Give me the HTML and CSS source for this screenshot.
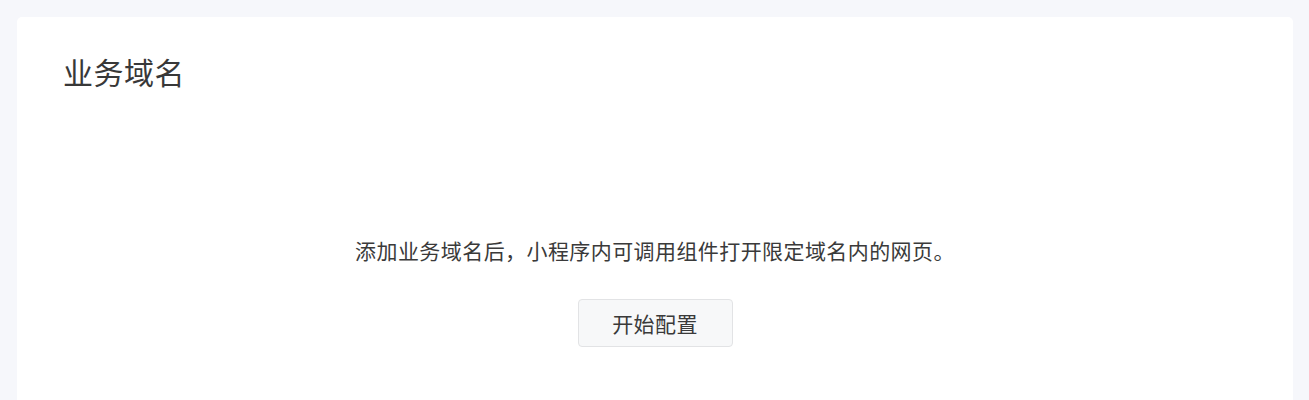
FILE: index.html
```html
<!DOCTYPE html>
<html lang="zh-CN">
<head>
<meta charset="utf-8">
<link rel="stylesheet" href="styles.css">
<title>业务域名</title>
</head>
<body>
<div class="page">
  <section class="card">
    <h2 class="card-title">业务域名</h2>
    <div class="empty">
      <p class="empty-text">添加业务域名后，小程序内可调用组件打开限定域名内的网页。</p>
      <button class="btn">开始配置</button>
    </div>
  </section>
</div>
</body>
</html>
```
FILE: styles.css
```css
html, body {
  margin: 0;
  padding: 0;
  background: #f6f7fb;
  font-family: "Noto Sans CJK SC", "Noto Sans", sans-serif;
  color: #353535;
}
.page {
  padding: 17px 16px 0 17px;
  height: 400px;
  box-sizing: border-box;
  overflow: hidden;
}
.card {
  background: #fff;
  border-radius: 5px;
  padding: 32px 46px 60px;
  min-height: 420px;
  box-sizing: border-box;
}
.card-title {
  margin: 0;
  font-size: 30px;
  font-weight: 400;
  line-height: 44px;
  letter-spacing: 0.5px;
  color: #383838;
}
.empty {
  display: flex;
  flex-direction: column;
  align-items: center;
  padding-top: 142px;
}
.empty-text {
  margin: 0;
  font-size: 21px;
  line-height: 30px;
  letter-spacing: 0.42px;
  color: #3a3a3a;
}
.btn {
  margin-top: 34px;
  width: 155px;
  height: 48px;
  background: #f7f8f9;
  border: 1px solid #e2e3e5;
  border-radius: 4px;
  font-family: inherit;
  font-size: 21px;
  letter-spacing: 0.4px;
  color: #3a3a3a;
  cursor: pointer;
}
```
